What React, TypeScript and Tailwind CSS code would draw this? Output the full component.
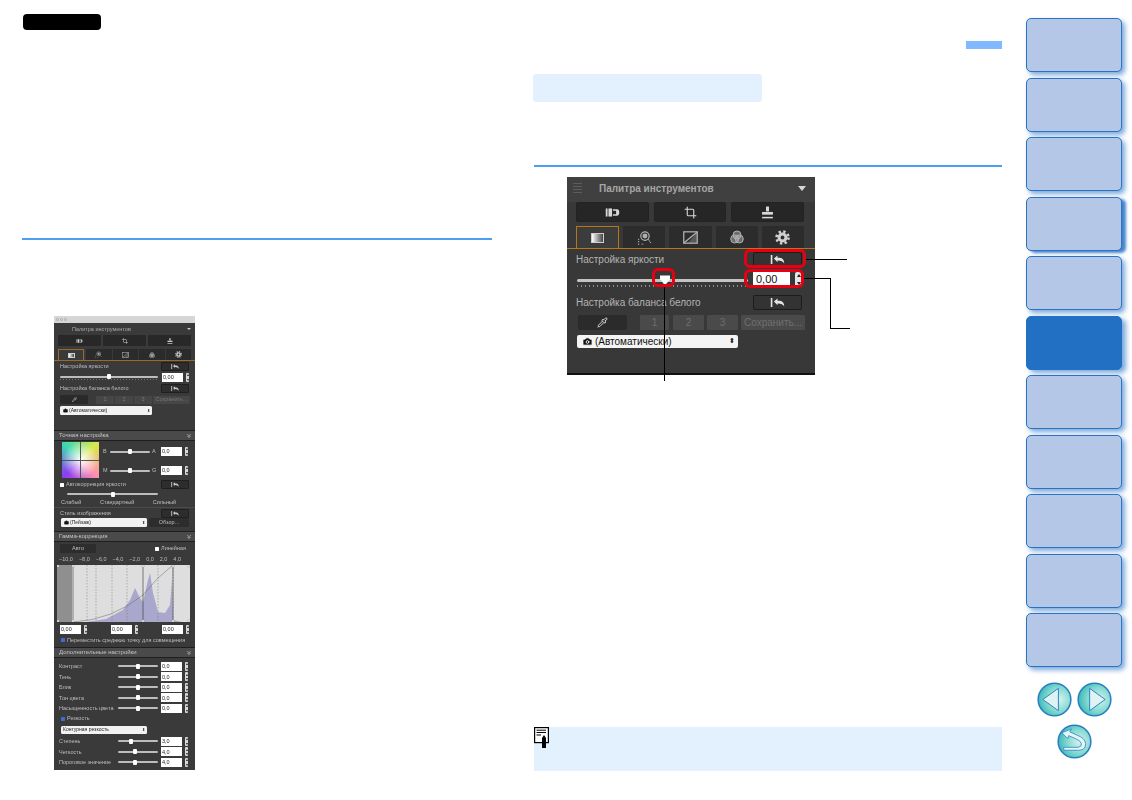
import React from 'react';
import { Crop, Camera, Pipette, ChevronsDown } from 'lucide-react';

const ResetIcon = ({ className }: { className: string }) => (
  <svg viewBox="0 0 16 10" className={className} fill="currentColor">
    <rect x="0.5" y="0" width="1.8" height="10" />
    <path d="M4 4 L8 0.5 V3 H10.5 Q15.5 3.5 15.5 9.5 Q13.5 5.8 8 6 V8 Z" />
  </svg>
);

const FilmIcon = ({ className }: { className: string }) => (
  <svg viewBox="0 0 16 10" className={className} fill="currentColor">
    <rect x="0.5" y="0.5" width="2" height="9" />
    <rect x="3.5" y="0.5" width="4" height="9" />
    <path d="M8.5 1.5 H13 Q15.5 1.5 15.5 5 Q15.5 8.5 13 8.5 H8.5 V7 H12 V3 H8.5 Z" />
  </svg>
);

const StampIcon = ({ className }: { className: string }) => (
  <svg viewBox="0 0 12 12" className={className} fill="currentColor">
    <rect x="4.6" y="0.5" width="2.8" height="4.5" />
    <rect x="1" y="5.5" width="10" height="2.5" />
    <rect x="1" y="10" width="10" height="1.4" />
  </svg>
);

const LensIcon = ({ className }: { className: string }) => (
  <svg viewBox="0 0 16 16" className={className} fill="none" stroke="currentColor" strokeWidth="1.3">
    <circle cx="8.5" cy="6.5" r="4.5" />
    <circle cx="8.5" cy="6.5" r="2" fill="currentColor" />
    <path d="M12 10 L15 14 M1 10 H3 M1 12.5 H3 M1 15 H3 M5 15 H7" strokeDasharray="1 0.8" />
  </svg>
);

const CurveIcon = ({ className }: { className: string }) => (
  <svg viewBox="0 0 14 12" className={className} fill="none" stroke="currentColor" strokeWidth="1.2">
    <rect x="0.7" y="0.7" width="12.6" height="10.6" />
    <path d="M1 11 L13 1" />
    <path d="M13 1 V11 H5 Z" fill="currentColor" fillOpacity="0.35" stroke="none" />
  </svg>
);

const ColorIcon = ({ className }: { className: string }) => (
  <svg viewBox="0 0 14 14" className={className} fill="currentColor" fillOpacity="0.5" stroke="currentColor" strokeWidth="1">
    <circle cx="7" cy="5" r="4" />
    <circle cx="4.7" cy="9" r="4" />
    <circle cx="9.3" cy="9" r="4" />
  </svg>
);

const GearIcon = ({ className }: { className: string }) => (
  <svg viewBox="0 0 14 14" className={className}>
    <circle cx="7" cy="7" r="4.6" fill="currentColor" />
    <circle cx="7" cy="7" r="5.6" fill="none" stroke="currentColor" strokeWidth="2.4" strokeDasharray="2.2 2.2" />
    <circle cx="7" cy="7" r="1.8" fill="#2c2c2c" />
  </svg>
);

const GradientSwatch = ({ className }: { className: string }) => (
  <div className={`border border-[#cfcfcf] bg-[linear-gradient(90deg,#ffffff,#444444)] ${className}`} />
);

const Spinner = ({ className }: { className: string }) => (
  <div className={`flex flex-col items-center justify-around rounded-[1px] bg-[#d8d8d8] ${className}`}>
    <div className="h-0 w-0 border-x-[1.5px] border-b-[2px] border-x-transparent border-b-[#222]" />
    <div className="h-0 w-0 border-x-[1.5px] border-t-[2px] border-x-transparent border-t-[#222]" />
  </div>
);

// small palette on the left page

const MiniReset = () => (
  <div className="flex h-[9px] w-[28px] items-center justify-center rounded-[1px] border border-[#1f1f1f] bg-[#2d2d2d] text-[#c8c8c8]">
    <ResetIcon className="h-[5px] w-[8px]" />
  </div>
);

const MiniField = ({ value }: { value: string }) => (
  <div className="flex items-center gap-[3px]">
    <div className="flex h-[9px] w-[21px] items-center bg-white pl-[1px] text-[5.5px] text-[#222]">{value}</div>
    <Spinner className="h-[9px] w-[3px]" />
  </div>
);

const MiniTrack = ({ className, thumb }: { className: string; thumb: string }) => (
  <div className={`relative h-[2px] rounded-full bg-[#bdbdbd] ${className}`}>
    <div className={`absolute top-[-1.5px] h-[5px] w-[4px] rounded-[1px] bg-white ${thumb}`} />
  </div>
);

const MiniHeader = ({ title }: { title: string }) => (
  <div className="flex h-[11px] items-center justify-between border-y border-y-[#1f1f1f] bg-[#4a4a4a] pl-[5px] pr-[3px] text-[6px] text-[#c4c4c4]">
    <span>{title}</span>
    <ChevronsDown className="h-[6px] w-[6px] text-[#d0d0d0]" strokeWidth={3} />
  </div>
);

const MiniAdjustRow = ({ label, value, thumb }: { label: string; value: string; thumb: string }) => (
  <div className="flex h-[10.5px] items-center pl-[5px] pr-[6px]">
    <span className="w-[59px] whitespace-nowrap">{label}</span>
    <MiniTrack className="w-[40px]" thumb={thumb} />
    <div className="ml-[3px]">
      <MiniField value={value} />
    </div>
  </div>
);

const MiniSelectCamera = ({ label, className }: { label: string; className: string }) => (
  <div className={`flex h-[9px] items-center justify-between rounded-[1.5px] bg-[#f2f2f2] pl-[3px] pr-[2px] text-[5px] text-[#222] ${className}`}>
    <span className="flex items-center gap-[1px]">
      <Camera className="h-[5px] w-[5px]" fill="#111" />
      {label}
    </span>
    <span className="text-[4px]">⬍</span>
  </div>
);

const Histogram = () => (
  <svg viewBox="0 0 133 57" className="h-[57px] w-[133px]">
    <rect width="133" height="57" fill="#dedede" />
    <rect width="15" height="57" fill="#8f8f8f" />
    <path
      d="M29 57 L49 54 L66 45 L73 35 L78 23 L83 33 L86 37 L91 15 L93 8 L96 28 L101 47 L108 48 L113 40 L115 15 L116 55 L125 57 Z"
      fill="#a9a7cc"
    />
    {[30, 39, 55, 70, 101, 116].map((x) => (
      <line key={x} x1={x} y1="0" x2={x} y2="57" stroke="#777" strokeWidth="0.5" strokeDasharray="1.5 1.5" />
    ))}
    <path d="M16 57 Q55 55 86 30 Q100 12 116 0" fill="none" stroke="#666" strokeWidth="0.5" />
    <line x1="16" y1="0" x2="16" y2="57" stroke="#444" strokeWidth="0.6" />
    <line x1="86" y1="0" x2="86" y2="57" stroke="#333" strokeWidth="0.6" />
    <line x1="116" y1="0" x2="116" y2="57" stroke="#333" strokeWidth="0.6" />
    {[1, 16, 86, 116, 132].map((x) => (
      <React.Fragment key={x}>
        <circle cx={x} cy="1" r="1.2" fill="#fff" stroke="#555" strokeWidth="0.3" />
        <circle cx={x} cy="56" r="1.2" fill="#fff" stroke="#555" strokeWidth="0.3" />
      </React.Fragment>
    ))}
  </svg>
);

const SmallPalette = () => (
  <div className="ml-[32px] mt-[76px] flex h-[454px] w-[141px] flex-col overflow-hidden bg-[#3a3a3a] text-[5.5px] text-[#bdbdbd] blur-[0.5px] [font-family:'Liberation_Sans',sans-serif]">
    <div className="flex h-[7px] items-center gap-[1px] bg-[#d6d6d6] pl-[2px]">
      <div className="h-[3px] w-[3px] rounded-full border border-[#aaa]" />
      <div className="h-[3px] w-[3px] rounded-full border border-[#aaa]" />
      <div className="h-[3px] w-[3px] rounded-full border border-[#aaa]" />
    </div>
    <div className="flex h-[12px] items-center justify-between pl-[18px] pr-[4px] text-[5.5px] text-[#aaa]">
      <span>Палитра инструментов</span>
      <div className="h-0 w-0 border-x-[2px] border-t-[2.5px] border-x-transparent border-t-[#ccc]" />
    </div>
    <div className="flex h-[11px] gap-[2px] px-[4px]">
      <div className="flex flex-1 items-center justify-center rounded-[1px] bg-[#282828] text-[#ccc]">
        <FilmIcon className="h-[4px] w-[7px]" />
      </div>
      <div className="flex flex-1 items-center justify-center rounded-[1px] bg-[#282828] text-[#ccc]">
        <Crop className="h-[6px] w-[6px]" />
      </div>
      <div className="flex flex-1 items-center justify-center rounded-[1px] bg-[#282828] text-[#ccc]">
        <StampIcon className="h-[6px] w-[6px]" />
      </div>
    </div>
    <div className="mt-[3px] flex h-[12px] border-b border-b-[#9a6a2a] pl-[4px] pr-[4px]">
      <div className="flex w-[26px] items-center justify-center border border-b-0 border-[#9a6a2a] bg-[#3a3a3a]">
        <GradientSwatch className="h-[5px] w-[7px]" />
      </div>
      <div className="ml-[2px] flex flex-1 items-center justify-center bg-[#2b2b2b] text-[#aaa]">
        <LensIcon className="h-[7px] w-[7px]" />
      </div>
      <div className="ml-[1px] flex flex-1 items-center justify-center bg-[#2b2b2b] text-[#aaa]">
        <CurveIcon className="h-[6px] w-[7px]" />
      </div>
      <div className="ml-[1px] flex flex-1 items-center justify-center bg-[#2b2b2b] text-[#aaa]">
        <ColorIcon className="h-[6px] w-[6px]" />
      </div>
      <div className="ml-[1px] flex flex-1 items-center justify-center bg-[#2b2b2b] text-[#ccc]">
        <GearIcon className="h-[7px] w-[7px]" />
      </div>
    </div>
    <div className="flex h-[11px] items-center justify-between pl-[6px] pr-[6px]">
      <span>Настройка яркости</span>
      <MiniReset />
    </div>
    <div className="flex h-[11px] items-center justify-between pl-[6px] pr-[6px]">
      <div className="flex flex-col gap-[1px]">
        <MiniTrack className="w-[98px]" thumb="left-[47px]" />
        <div className="h-[1px] w-[98px] bg-[repeating-linear-gradient(90deg,#777_0_1px,transparent_1px_3px)]" />
      </div>
      <MiniField value="0,00" />
    </div>
    <div className="flex h-[11px] items-center justify-between pl-[6px] pr-[6px]">
      <span>Настройка баланса белого</span>
      <MiniReset />
    </div>
    <div className="flex h-[11px] items-center gap-[1px] pl-[6px] pr-[5px]">
      <div className="flex h-[9px] w-[28px] items-center justify-center rounded-[1px] bg-[#2a2a2a] text-[#ddd]">
        <Pipette className="h-[5px] w-[5px]" />
      </div>
      <div className="ml-[7px] flex h-[8px] w-[18px] items-center justify-center bg-[#464646] text-[#777]">1</div>
      <div className="flex h-[8px] w-[18px] items-center justify-center bg-[#464646] text-[#777]">2</div>
      <div className="flex h-[8px] w-[18px] items-center justify-center bg-[#464646] text-[#777]">3</div>
      <div className="flex h-[8px] flex-1 items-center justify-center bg-[#464646] text-[#777]">Сохранить...</div>
    </div>
    <div className="mt-[1px] pl-[6px]">
      <MiniSelectCamera label="(Автоматически)" className="w-[92px]" />
    </div>

    <div className="mt-[15px]">
      <MiniHeader title="Точная настройка" />
    </div>
    <div className="flex h-[39px] pl-[8px] pr-[6px] pt-[1px]">
      <div className="relative h-[36px] w-[37px] bg-[radial-gradient(circle,#ffffff_0%,#ffffff00_70%),conic-gradient(from_45deg,#d8e84a,#ff8fb0,#8a3cf0,#3ed8b0,#d8e84a)]">
        <div className="absolute left-[18px] top-0 h-full w-[1px] bg-[#555]" />
        <div className="absolute left-0 top-[18px] h-[1px] w-full bg-[#555]" />
      </div>
      <div className="ml-[4px] flex flex-1 flex-col justify-around">
        <div className="flex items-center">
          <span className="w-[7px]">B</span>
          <MiniTrack className="w-[40px]" thumb="left-[18px]" />
          <span className="ml-[2px] w-[9px]">A</span>
          <MiniField value="0,0" />
        </div>
        <div className="flex items-center">
          <span className="w-[7px]">M</span>
          <MiniTrack className="w-[40px]" thumb="left-[18px]" />
          <span className="ml-[2px] w-[9px]">G</span>
          <MiniField value="0,0" />
        </div>
      </div>
    </div>
    <div className="flex h-[9px] items-center justify-between pl-[6px] pr-[6px]">
      <span className="flex items-center gap-[2px]">
        <span className="h-[4px] w-[4px] rounded-[0.5px] bg-white" />
        Автокоррекция яркости
      </span>
      <MiniReset />
    </div>
    <div className="flex h-[10px] items-center pl-[13px]">
      <MiniTrack className="w-[91px]" thumb="left-[44px]" />
    </div>
    <div className="flex h-[6px] items-center justify-between pl-[7px] pr-[19px]">
      <span>Слабый</span>
      <span>Стандартный</span>
      <span>Сильный</span>
    </div>
    <div className="mt-[2px] flex h-[11px] items-center justify-between border-t border-t-[#4b4b4b] pl-[6px] pr-[6px]">
      <span>Стиль изображения</span>
      <MiniReset />
    </div>
    <div className="flex h-[9px] items-center gap-[2px] pl-[7px] pr-[6px]">
      <MiniSelectCamera label="(Пейзаж)" className="w-[86px]" />
      <div className="flex h-[9px] flex-1 items-center justify-center rounded-[1px] bg-[#2d2d2d]">Обзор...</div>
    </div>

    <div className="mt-[4px]">
      <MiniHeader title="Гамма-коррекция" />
    </div>
    <div className="flex h-[13px] items-center justify-between pl-[6px] pr-[9px]">
      <div className="flex h-[9px] w-[36px] items-center justify-center rounded-[1px] bg-[#2d2d2d]">Авто</div>
      <span className="flex items-center gap-[2px]">
        <span className="h-[4px] w-[4px] rounded-[0.5px] bg-white" />
        Линейная
      </span>
    </div>
    <div className="flex h-[9px] items-center justify-between pl-[5px] pr-[14px]">
      {['−10,0', '−8,0', '−6,0', '−4,0', '−2,0', '0,0', '2,0', '4,0'].map((n) => (
        <span key={n}>{n}</span>
      ))}
    </div>
    <div className="mt-[1px] pl-[3px]">
      <Histogram />
    </div>
    <div className="mt-[3px] flex h-[9px] items-center justify-between pl-[6px] pr-[6px]">
      <MiniField value="0,00" />
      <MiniField value="0,00" />
      <MiniField value="0,00" />
    </div>
    <div className="mt-[1px] flex h-[10px] items-center gap-[2px] pl-[7px]">
      <span className="h-[4px] w-[4px] rounded-[0.5px] bg-[#3a6fd0]" />
      <span className="whitespace-nowrap text-[5.5px]">Переместить среднюю точку для совмещения</span>
    </div>

    <div className="mt-[2px]">
      <MiniHeader title="Дополнительные настройки" />
    </div>
    <div className="mt-[3px] flex flex-col">
      <MiniAdjustRow label="Контраст" value="0,0" thumb="left-[18px]" />
      <MiniAdjustRow label="Тень" value="0,0" thumb="left-[18px]" />
      <MiniAdjustRow label="Блик" value="0,0" thumb="left-[18px]" />
      <MiniAdjustRow label="Тон цвета" value="0,0" thumb="left-[18px]" />
      <MiniAdjustRow label="Насыщенность цвета" value="0,0" thumb="left-[18px]" />
    </div>
    <div className="flex h-[10px] items-center gap-[2px] pl-[7px]">
      <span className="h-[4px] w-[4px] rounded-[0.5px] bg-[#3a6fd0]" />
      Резкость
    </div>
    <div className="mt-[2.5px] pl-[7px]">
      <div className="flex h-[8px] w-[86px] items-center justify-between rounded-[1.5px] bg-[#f2f2f2] pl-[2px] pr-[2px] text-[5px] text-[#222]">
        <span>Контурная резкость</span>
        <span className="text-[4px]">⬍</span>
      </div>
    </div>
    <div className="mt-[2px] flex flex-col">
      <MiniAdjustRow label="Степень" value="3,0" thumb="left-[11px]" />
      <MiniAdjustRow label="Четкость" value="4,0" thumb="left-[15px]" />
      <MiniAdjustRow label="Пороговое значение" value="4,0" thumb="left-[15px]" />
    </div>
  </div>
);

// enlarged palette on the right page

const ResetButton = () => (
  <div className="flex h-[15px] w-[49px] items-center justify-center rounded-[2px] border border-[#1c1c1c] bg-[#333333] text-[#e4e4e4]">
    <ResetIcon className="h-[9px] w-[15px]" />
  </div>
);

const ToolButton = ({ children }: { children: React.ReactNode }) => (
  <div className="flex h-[20px] flex-1 items-center justify-center rounded-[2px] border border-[#232323] bg-[#262626] text-[#d8d8d8]">
    {children}
  </div>
);

const DisabledButton = ({ label, className }: { label: string; className: string }) => (
  <div className={`flex h-[15px] items-center justify-center rounded-[1px] bg-[#4a4a4a] text-[#6f6f6f] ${className}`}>{label}</div>
);

const LargePalette = () => (
  <div className="relative ml-[33px] mt-[10px] w-[248px]">
    <div className="flex h-[198px] flex-col border-b-2 border-b-[#111] bg-[#383838] text-[10px] text-[#b4b4b4] [font-family:'Liberation_Sans',sans-serif]">
      <div className="flex h-[25px] items-center justify-between bg-[#404040] pb-[3px] pl-[6px] pr-[9px]">
        <div className="flex items-center gap-[17px]">
          <div className="h-[10px] w-[9px] bg-[repeating-linear-gradient(0deg,#5c5c5c_0_1px,transparent_1px_3px)]" />
          <span className="text-[10px] font-bold text-[#a6a6a6]">Палитра инструментов</span>
        </div>
        <div className="h-0 w-0 border-x-[4px] border-t-[5px] border-x-transparent border-t-[#d6d6d6]" />
      </div>
      <div className="flex gap-[5px] pl-[9px] pr-[11px]">
        <ToolButton>
          <FilmIcon className="h-[9px] w-[15px]" />
        </ToolButton>
        <ToolButton>
          <Crop className="h-[13px] w-[13px]" strokeWidth={2} />
        </ToolButton>
        <ToolButton>
          <StampIcon className="h-[13px] w-[13px]" />
        </ToolButton>
      </div>
      <div className="mt-[4px] flex h-[23px] gap-[4px] border-b border-b-[#b5761f] pl-[9px] pr-[11px]">
        <div className="flex w-[43px] items-center justify-center border border-b-0 border-[#b5761f] bg-[#3c3c3c]">
          <GradientSwatch className="h-[10px] w-[13px]" />
        </div>
        <div className="flex flex-1 items-center justify-center bg-[#2c2c2c] text-[#b0b0b0]">
          <LensIcon className="h-[15px] w-[15px]" />
        </div>
        <div className="flex flex-1 items-center justify-center bg-[#2c2c2c] text-[#b0b0b0]">
          <CurveIcon className="h-[13px] w-[15px]" />
        </div>
        <div className="flex flex-1 items-center justify-center bg-[#2c2c2c] text-[#b0b0b0]">
          <ColorIcon className="h-[14px] w-[14px]" />
        </div>
        <div className="flex flex-1 items-center justify-center bg-[#2c2c2c] text-[#d0d0d0]">
          <GearIcon className="h-[15px] w-[15px]" />
        </div>
      </div>
      <div className="mt-[3px] flex h-[15px] items-center justify-between pl-[9px] pr-[13px]">
        <span>Настройка яркости</span>
        <ResetButton />
      </div>
      <div className="mt-[5px] flex h-[15px] items-center justify-between pl-[10px] pr-[13px]">
        <div className="flex flex-col gap-[3px] pt-[6px]">
          <div className="relative h-[3px] w-[171px] rounded-full bg-[#c4c4c4]">
            <svg viewBox="0 0 12 11" className="absolute left-[82px] top-[-4px] h-[11px] w-[12px]">
              <path d="M1 0.5 H11 V4 L6 10.5 L1 4 Z" fill="#fff" />
            </svg>
          </div>
          <div className="h-[2px] w-[171px] bg-[repeating-linear-gradient(90deg,#8a8a8a_0_1px,transparent_1px_4px)]" />
        </div>
        <div className="flex items-center gap-[5px]">
          <div className="flex h-[15px] w-[37px] items-center bg-white pl-[3px] text-[11px] text-[#111]">0,00</div>
          <div className="flex h-[15px] w-[7px] flex-col items-center justify-around rounded-[2px] bg-[#e6e6e6]">
            <div className="h-0 w-0 border-x-[2.5px] border-b-[3px] border-x-transparent border-b-[#222]" />
            <div className="h-0 w-0 border-x-[2.5px] border-t-[3px] border-x-transparent border-t-[#222]" />
          </div>
        </div>
      </div>
      <div className="mt-[8px] flex h-[15px] items-center justify-between pl-[9px] pr-[13px]">
        <span>Настройка баланса белого</span>
        <ResetButton />
      </div>
      <div className="mt-[5px] flex h-[15px] items-center pl-[11px]">
        <div className="flex h-[15px] w-[49px] items-center justify-center rounded-[2px] bg-[#2b2b2b] text-[#e0e0e0]">
          <Pipette className="h-[11px] w-[11px]" />
        </div>
        <DisabledButton label="1" className="ml-[13px] w-[29px]" />
        <DisabledButton label="2" className="ml-[4px] w-[31px]" />
        <DisabledButton label="3" className="ml-[3px] w-[31px]" />
        <DisabledButton label="Сохранить..." className="ml-[3px] w-[64px]" />
      </div>
      <div className="mt-[5px] pl-[10px]">
        <div className="flex h-[13px] w-[161px] items-center justify-between rounded-[2px] bg-[#f4f4f4] pl-[5px] pr-[3px] text-[10px] text-[#111]">
          <span className="flex items-center gap-[2px]">
            <Camera className="h-[11px] w-[11px] text-white" fill="#111" />
            (Автоматически)
          </span>
          <span className="text-[7px]">⬍</span>
        </div>
      </div>
    </div>

    <div className="absolute left-[177px] top-[72px] h-[19px] w-[62px] rounded-[6px] border-[3px] border-[#e60012]" />
    <div className="absolute left-[177px] top-[92px] h-[19px] w-[60px] rounded-[6px] border-[3px] border-[#e60012]" />
    <div className="absolute left-[85px] top-[91px] h-[19px] w-[23px] rounded-[6px] border-[3px] border-[#e60012]" />
    <div className="absolute left-[239px] top-[82px] h-[1px] w-[41px] bg-black" />
    <div className="absolute left-[237px] top-[101px] h-[1px] w-[26px] bg-black" />
    <div className="absolute left-[263px] top-[101px] h-[50px] w-[1px] bg-black" />
    <div className="absolute left-[263px] top-[151px] h-[1px] w-[20px] bg-black" />
    <div className="absolute left-[97px] top-[110px] h-[94px] w-[1px] bg-black" />
  </div>
);

const NoteIcon = () => (
  <svg viewBox="0 0 15 21" className="h-[21px] w-[15px] shrink-0">
    <rect x="0.6" y="0.6" width="13.8" height="15" fill="#fff" stroke="#000" strokeWidth="1.2" />
    <path d="M2.5 3.2 H12 M2.5 5.5 H12 M2.5 8 H7" stroke="#000" strokeWidth="1" />
    <path d="M8 11 L10 8 L12 11 V21 H8 Z" fill="#000" />
  </svg>
);

const NavCircle = ({ children }: { children: React.ReactNode }) => (
  <svg viewBox="0 0 36 36" className="h-[35px] w-[35px]">
    <defs>
      <radialGradient id="navFill" cx="65%" cy="50%" r="70%">
        <stop offset="0%" stopColor="#d7f3ee" />
        <stop offset="55%" stopColor="#7fd8cf" />
        <stop offset="100%" stopColor="#2fb2b4" />
      </radialGradient>
    </defs>
    <circle cx="18" cy="18" r="16.8" fill="url(#navFill)" stroke="#2a7fc4" strokeWidth="1.6" />
    {children}
  </svg>
);

const SideNav = () => (
  <div className="ml-[24px] flex w-[96px] flex-col pt-[18px]">
    <div className="flex flex-col gap-[5.5px]">
      {[0, 1, 2, 3, 4, 5, 6, 7, 8, 9, 10].map((i) => (
        <div
          key={i}
          className={
            i === 5
              ? 'h-[54px] rounded-[5px] border border-[#2170c4] bg-[#2170c4] shadow-[4px_3px_5px_rgba(33,112,196,0.6)]'
              : i === 3
              ? 'h-[54px] rounded-[5px] border border-[#2a72c4] bg-[#b4c7e7] shadow-[4px_2px_3px_rgba(33,112,196,0.85)]'
              : 'h-[54px] rounded-[5px] border border-[#2a72c4] bg-[#b4c7e7] shadow-[3px_3px_5px_rgba(33,112,196,0.6)]'
          }
        />
      ))}
    </div>
    <div className="mt-[15px] flex justify-center gap-[5px]">
      <NavCircle>
        <path d="M6 18 L22 6.5 V29.5 Z" fill="#dff3f3" stroke="#2a7fc4" strokeWidth="1" />
      </NavCircle>
      <NavCircle>
        <path d="M29 18 L13 6.5 V29.5 Z" fill="#dff3f3" stroke="#2a7fc4" strokeWidth="1" />
      </NavCircle>
    </div>
    <div className="mt-[7px] flex justify-center">
      <NavCircle>
        <path d="M5 9 L15 5 L13 8 L24 13 Q31 17 29 23 Q28 27 22 27 H7 V24 H22 Q26 23 25 20 Q24 17 19 15 L12 12 L11 15 Z" fill="#e4f6f6" stroke="#2a7fc4" strokeWidth="0.8" />
      </NavCircle>
    </div>
  </div>
);

export default function App() {
  return (
    <div className="flex h-[800px] w-[1132px] overflow-hidden bg-white">
      <div className="ml-[22px] w-[470px] shrink-0">
        <div className="ml-[1px] mt-[14px] h-[16px] w-[78px] rounded-[4px] bg-black" />
        <div className="mt-[208px] h-[2px] bg-[#4d9ef0]" />
        <SmallPalette />
      </div>

      <div className="ml-[42px] w-[468px] shrink-0">
        <div className="ml-auto mt-[41px] h-[8px] w-[36px] bg-[#80b9ff]" />
        <div className="ml-[-1px] mt-[25px] h-[28px] w-[229px] rounded-[3px] bg-[#e3f0fd]" />
        <div className="mt-[63px] h-[2px] bg-[#4d9ef0]" />
        <LargePalette />
        <div className="mt-[352px] flex h-[44px] items-start bg-[#e3f0fd]">
          <NoteIcon />
        </div>
      </div>

      <SideNav />
    </div>
  );
}
